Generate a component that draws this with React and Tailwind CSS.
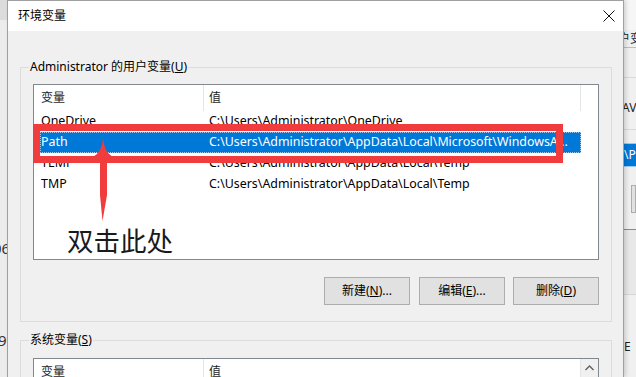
import React from 'react';

const font = { fontFamily: '"Noto Sans", "Noto Sans CJK SC", sans-serif' };

const userVars = [
  { name: 'OneDrive', value: 'C:\\Users\\Administrator\\OneDrive' },
  { name: 'Path', value: 'C:\\Users\\Administrator\\AppData\\Local\\Microsoft\\WindowsA...', selected: true },
  { name: 'TEMP', value: 'C:\\Users\\Administrator\\AppData\\Local\\Temp' },
  { name: 'TMP', value: 'C:\\Users\\Administrator\\AppData\\Local\\Temp' },
];

const ListHeader = () => (
  <div className="flex h-[26px] text-[#1e1e1e]">
    <div className="w-[170px] pl-[7px] flex items-center border-r border-[#e5e5e5]">变量</div>
    <div className="w-[377px] pl-[5px] flex items-center border-r border-[#e5e5e5]">值</div>
  </div>
);

const Button = ({ children }) => (
  <button className="w-[86px] h-[28px] bg-[#e1e1e1] border border-[#adadad] text-[12px] text-black flex items-center justify-center">
    {children}
  </button>
);

const GroupBox = ({ label, children, className = '' }) => (
  <fieldset className={`border border-[#dcdcdc] ml-[12px] mr-[11px] px-[12px] ${className}`}>
    <legend className="-ml-[4px] px-[1px] leading-[16px] text-[12px] text-black">{label}</legend>
    {children}
  </fieldset>
);

export default function App() {
  return (
    <div className="relative w-[636px] h-[377px] overflow-hidden bg-[#f0f0f0] flex text-[12px]" style={font}>
      {/* background window, left */}
      <div className="w-[7px] flex flex-col overflow-hidden bg-[#ececec]">
        <div className="h-[20px] bg-[#dcdcdc] shrink-0" />
        <div className="mt-[218px] -ml-[7px] text-[15px] leading-[20px] text-[#333]">06</div>
        <div className="mt-[72px] -ml-[2px] text-[15px] leading-[20px] text-[#333]">9</div>
      </div>

      {/* dialog */}
      <div className="w-[617px] h-full border-x border-t border-[#a0a0a0] flex flex-col bg-[#f0f0f0] shadow-[2px_0_4px_rgba(0,0,0,0.15)] z-10">
        <div className="h-[30px] bg-white flex items-center justify-between pl-[10px] pr-[8px] shrink-0">
          <span className="text-[12px] text-black">环境变量</span>
          <svg width="12" height="12" viewBox="0 0 12 12">
            <path d="M0.5 0.5 L11.5 11.5 M11.5 0.5 L0.5 11.5" stroke="#111" strokeWidth="1" />
          </svg>
        </div>

        <GroupBox
          className="mt-[28px] pb-[16px]"
          label={<>Administrator 的用户变量(<span className="underline">U</span>)</>}
        >
          <div className="mt-[9px] h-[176px] bg-white border border-[#828790]">
            <ListHeader />
            {userVars.map((v) => (
              <div
                key={v.name}
                className={`ml-[6px] w-[541px] h-[21px] flex items-center text-[12.4px] ${
                  v.selected ? 'bg-[#0078d7] text-white outline-1 outline-dotted outline-[#9cc8f0] -outline-offset-1' : 'text-black'
                }`}
              >
                <div className="w-[163px] pl-[1px]">{v.name}</div>
                <div className="pl-[6px] whitespace-nowrap">{v.value}</div>
              </div>
            ))}
          </div>
          <div className="mt-[17px] flex justify-end">
            <Button>新建(<span className="underline">N</span>)...</Button>
            <div className="w-[9px]" />
            <Button>编辑(<span className="underline">E</span>)...</Button>
            <div className="w-[8px]" />
            <Button>删除(<span className="underline">D</span>)</Button>
          </div>
        </GroupBox>

        <GroupBox className="mt-[10px] pb-[16px]" label={<>系统变量(<span className="underline">S</span>)</>}>
          <div className="mt-[10px] h-[120px] bg-white border border-[#828790] flex">
            <div className="flex-1">
              <ListHeader />
            </div>
            <div className="w-[17px] bg-[#f0f0f0] flex flex-col">
              <div className="h-[17px] flex items-center justify-center">
                <svg width="9" height="6" viewBox="0 0 9 6">
                  <path d="M0.5 5 L4.5 1 L8.5 5" stroke="#606060" strokeWidth="1.4" fill="none" />
                </svg>
              </div>
            </div>
          </div>
        </GroupBox>
      </div>

      {/* background window, right */}
      <div className="flex-1 flex flex-col overflow-hidden bg-[#f0f0f0] text-[#222] whitespace-nowrap">
        <div className="h-[30px] bg-[#f6f6f6] shrink-0" />
        <div className="h-[18px] -ml-[6px] leading-[18px] border-b border-[#bdbdbd] shrink-0">户变</div>
        <div className="h-[30px] border-b border-[#d9d9d9] shrink-0" />
        <div className="h-[52px] border-b border-[#d9d9d9] flex items-end pb-[12px] -ml-[2px] shrink-0">AV</div>
        <div className="h-[13px] shrink-0" />
        <div className="h-[24px] bg-[#0078d7] text-white flex items-center border-y border-[#9cc8f0] shrink-0">\P</div>
        <div className="h-[18px] shrink-0" />
        <div className="h-[28px] ml-[7px] bg-[#e1e1e1] border border-[#adadad] shrink-0" />
        <div className="h-[17px] border-b border-[#8a8a8a] shrink-0" />
        <div className="h-[65px] bg-[#e8e8e8] border-b border-[#d6d6d6] shrink-0" />
        <div className="h-[60px] flex items-end text-[12px] leading-[16px]">E</div>
      </div>

      {/* annotation overlays */}
      <div className="absolute left-[33px] top-[124px] w-[530px] h-[39px] border-[7px] border-[#f03c3c] z-20" />
      <svg className="absolute left-[88px] top-[136px] z-20" width="30" height="90" viewBox="88 136 30 90">
        <path
          d="M103 138 Q104 152 113 157 L107 158.5 L107 195 L102.5 221 L100 195 L100 158.5 L93 157 Q102 152 103 138 Z"
          fill="#f03c3c"
        />
      </svg>
      <div
        className="absolute left-[67px] top-[227px] text-[26.5px] leading-none text-[#1a1a1a] z-20"
        style={{ fontFamily: '"Noto Sans CJK SC", sans-serif' }}
      >
        双击此处
      </div>
    </div>
  );
}
